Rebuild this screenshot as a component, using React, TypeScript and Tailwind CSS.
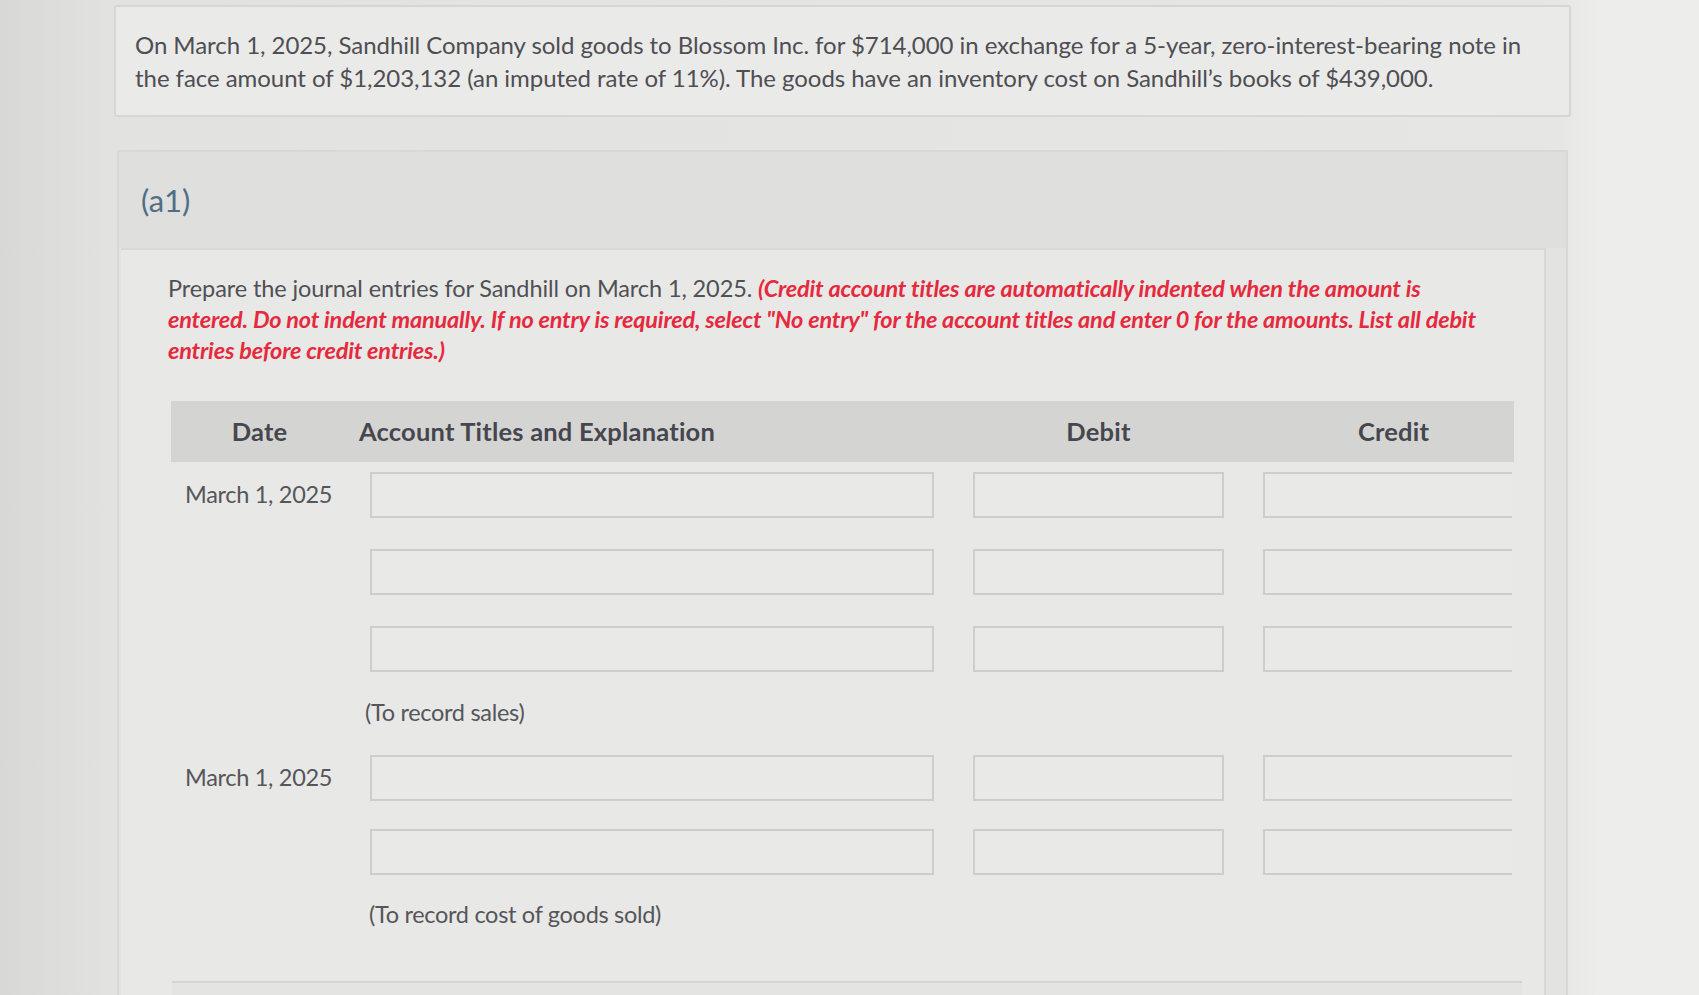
import React from 'react'

const font = { fontFamily: 'Lato, "Open Sans", sans-serif' }

function Field({ className = '' }: { className?: string }) {
  return <div className={`h-[46px] border-2 border-[#cdcdcb] bg-[#e9e9e7] ${className}`} />
}

function EntryRow({ date }: { date?: string }) {
  return (
    <>
      <div className="flex items-center pl-[14px] text-[23.5px] tracking-[-0.3px] text-[#55555a]">{date}</div>
      <Field className="ml-[8px]" />
      <div />
      <Field />
      <div />
      <Field className="border-r-0" />
    </>
  )
}

export default function App() {
  return (
    <div style={font} className="h-[995px] w-[1699px] overflow-hidden bg-[linear-gradient(90deg,#d8d8d6_0px,#e2e2e0_114px,#e6e6e4_1560px,#ededeb_1600px)] pt-[5px]">
      <div className="ml-[114px] w-[1457px]">
        {/* Problem statement */}
        <div className="rounded-[3px] border-2 border-[#d6d6d4] bg-[#eaeae8] px-[19px] pb-[21px] pt-[22px]">
          <p className="text-[24px] leading-[32.5px] tracking-[-0.05px] text-[#4e4e53]">
            On March 1, 2025, Sandhill Company sold goods to Blossom Inc. for $714,000 in exchange for a 5-year, zero-interest-bearing note in
            <br />
            the face amount of $1,203,132 (an imputed rate of 11%). The goods have an inventory cost on Sandhill’s books of $439,000.
          </p>
        </div>

        {/* Part a1 */}
        <div className="mt-[33px] ml-[3px] w-[1451px] border-2 border-[#d8d8d6] bg-[#e3e3e1]">
          <div className="flex h-[96px] items-center bg-[#dfdfdd] px-[22px]">
            <span className="text-[31px] text-[#4f6e85]">(a1)</span>
          </div>
          <div className="mr-[20px] ml-[2px] border-t-2 border-r-2 border-[#d8d8d6] bg-[#e8e8e6] pl-[47px] pt-[23px] pb-[56px]">
            <p className="text-[23.5px] leading-[31px] tracking-[-0.1px] text-[#505055]">
              Prepare the journal entries for Sandhill on March 1, 2025.{' '}
              <span className="font-bold italic tracking-[-0.2px] text-[#e52a3e]">
                (Credit account titles are automatically indented when the amount is
                <br />
                entered. Do not indent manually. If no entry is required, select "No entry" for the account titles and enter 0 for the amounts. List all debit
                <br />
                entries before credit entries.)
              </span>
            </p>

            <div className="mt-[35px] ml-[3px] w-[1343px]">
              <div className="grid h-[61px] grid-cols-[191px_572px_39px_251px_39px_249px] items-center bg-[#d4d4d2] text-[25.5px] font-bold tracking-[0.2px] text-[#46464e]">
                <div className="pr-[14px] text-center">Date</div>
                <div className="-ml-[3px]">Account Titles and Explanation</div>
                <div />
                <div className="text-center">Debit</div>
                <div />
                <div className="pl-[12px] text-center">Credit</div>
              </div>

              <div className="mt-[10px] grid grid-cols-[191px_572px_39px_251px_39px_249px] gap-y-[31px]">
                <EntryRow date="March 1, 2025" />
                <EntryRow />
                <EntryRow />
              </div>
              <div className="mt-[25px] pl-[194px] text-[23.5px] leading-[30px] tracking-[-0.3px] text-[#55555a]">(To record sales)</div>

              <div className="mt-[28px] grid grid-cols-[191px_572px_39px_251px_39px_249px] gap-y-[28px]">
                <EntryRow date="March 1, 2025" />
                <EntryRow />
              </div>
              <div className="mt-[24px] pl-[198px] text-[23.5px] leading-[30px] tracking-[-0.3px] text-[#55555a]">(To record cost of goods sold)</div>
            </div>

            <div className="mt-[52px] ml-[4px] w-[1350px] h-[30px] border-t-2 border-[#d4d4d2] bg-[#e4e4e2]" />
          </div>
        </div>
      </div>
    </div>
  )
}
